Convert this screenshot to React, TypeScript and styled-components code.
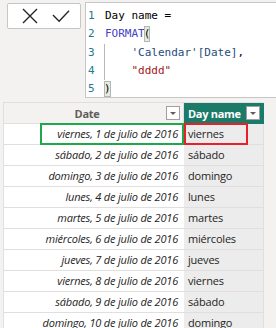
import React from "react";
import styled, { createGlobalStyle } from "styled-components";

const Global = createGlobalStyle`
  html, body { margin: 0; padding: 0; }
  body {
    background: #f3f2f1;
    font-family: "Open Sans", "Noto Sans", sans-serif;
    width: 276px;
    height: 328px;
    overflow: hidden;
  }
`;

const Page = styled.div`
  display: flex;
  flex-direction: column;
`;

const FormulaBar = styled.div`
  display: flex;
  align-items: flex-start;
  padding-top: 2px;
`;

const ActionBox = styled.div`
  margin: 1px 0 0 7px;
  width: 74px;
  height: 26px;
  box-sizing: border-box;
  background: #ffffff;
  border: 1px solid #c8c6c4;
  border-radius: 2px;
  display: flex;
  align-items: center;
  justify-content: center;
  gap: 13px;
  padding-left: 2px;
`;

const IconBtn = styled.span`
  display: flex;
  align-items: center;
  justify-content: center;
  width: 18px;
  height: 18px;
`;

const Editor = styled.div`
  margin-left: 4px;
  flex: 1;
  height: 96px;
  box-sizing: border-box;
  background: #ffffff;
  border: 1px solid #c8c6c4;
  border-right: none;
  padding: 4px 0 0 2px;
  font-family: "DejaVu Sans Mono", "Liberation Mono", monospace;
  font-size: 11px;
`;

const Line = styled.div`
  display: flex;
  height: 18.3px;
  line-height: 18.3px;
  white-space: pre;
`;

const LineNo = styled.span`
  width: 16px;
  color: #237893;
`;

const Code = styled.span<{ $guide?: boolean }>`
  display: inline-block;
  color: #000000;
  border-left: 1px solid ${(p) => (p.$guide ? "#b8b8b8" : "transparent")};
`;

const Fn = styled.span`
  color: #4343c4;
`;

const Ref = styled.span`
  color: #1d4b7e;
`;

const Str = styled.span`
  color: #a31515;
`;

const Paren = styled.span`
  display: inline-block;
  line-height: 15px;
  height: 16px;
  vertical-align: middle;
  background: #e6eae3;
  outline: 1px solid #b3b9b0;
  outline-offset: -1px;
  color: #000;
  margin-left: -1px;
`;

const Table = styled.div`
  position: relative;
  margin: 4px 0 0 3px;
  width: 260px;
  display: grid;
  grid-template-columns: 180px 80px;
  grid-auto-rows: 21px;
  font-size: 11px;
  letter-spacing: -0.2px;
  border-top: 1px solid #e1dfdd;
  border-left: 1px solid #e1dfdd;
  box-sizing: border-box;
`;

const HeadCell = styled.div<{ $active?: boolean }>`
  display: flex;
  align-items: center;
  background: ${(p) => (p.$active ? "#1c7a68" : "#f3f2f1")};
  color: ${(p) => (p.$active ? "#ffffff" : "#605e5c")};
  font-weight: 700;
  font-size: 11px;
  letter-spacing: -0.3px;
  padding: 0 3px 0 4px;
  border-right: 1px solid ${(p) => (p.$active ? "#1c7a68" : "#e1dfdd")};
  border-bottom: 1px solid ${(p) => (p.$active ? "#1c7a68" : "#e1dfdd")};
  box-sizing: border-box;
  white-space: nowrap;
`;

const HeadLabel = styled.span<{ $center?: boolean }>`
  flex: 1;
  line-height: 1;
  text-align: ${(p) => (p.$center ? "center" : "left")};
`;

const Drop = styled.span`
  width: 14px;
  height: 14px;
  flex: none;
  box-sizing: border-box;
  background: #ffffff;
  border: 1px solid #a19f9d;
  display: flex;
  align-items: center;
  justify-content: center;
  &::after {
    content: "";
    border-left: 3px solid transparent;
    border-right: 3px solid transparent;
    border-top: 3px solid #605e5c;
  }
`;

const DateCell = styled.div`
  position: relative;
  background: #ffffff;
  font-style: italic;
  color: #252423;
  text-align: right;
  padding-right: 6px;
  line-height: 20px;
  white-space: nowrap;
  border-bottom: 1px solid #e1dfdd;
  box-sizing: border-box;
`;

const DayCell = styled.div`
  position: relative;
  background: #ececec;
  color: #252423;
  padding-left: 4px;
  line-height: 20px;
  white-space: nowrap;
  border-bottom: 1px solid #e1dfdd;
  border-right: 1px solid #e1dfdd;
  box-sizing: border-box;
`;

const Mark = styled.span<{ $color: string; $left: number; $width: number }>`
  position: absolute;
  top: -1px;
  height: 22px;
  left: ${(p) => p.$left}px;
  width: ${(p) => p.$width}px;
  box-sizing: border-box;
  border: 2px solid ${(p) => p.$color};
  pointer-events: none;
`;

const rows: [string, string][] = [
  ["viernes, 1 de julio de 2016", "viernes"],
  ["sábado, 2 de julio de 2016", "sábado"],
  ["domingo, 3 de julio de 2016", "domingo"],
  ["lunes, 4 de julio de 2016", "lunes"],
  ["martes, 5 de julio de 2016", "martes"],
  ["miércoles, 6 de julio de 2016", "miércoles"],
  ["jueves, 7 de julio de 2016", "jueves"],
  ["viernes, 8 de julio de 2016", "viernes"],
  ["sábado, 9 de julio de 2016", "sábado"],
  ["domingo, 10 de julio de 2016", "domingo"],
];

export default function App() {
  return (
    <Page>
      <Global />
      <FormulaBar>
        <ActionBox>
          <IconBtn>
            <svg width="16" height="16" viewBox="0 0 16 16">
              <path d="M1 1 L15 15 M15 1 L1 15" stroke="#252423" strokeWidth="1.4" fill="none" />
            </svg>
          </IconBtn>
          <IconBtn>
            <svg width="19" height="14" viewBox="0 0 19 14">
              <path d="M1 6 L7.5 12.5 L18 1.5" stroke="#252423" strokeWidth="1.4" fill="none" />
            </svg>
          </IconBtn>
        </ActionBox>
        <Editor>
          <Line>
            <LineNo>1</LineNo>
            <Code>Day name =</Code>
          </Line>
          <Line>
            <LineNo>2</LineNo>
            <Code>
              <Fn>FORMAT</Fn>
              <Paren>(</Paren>
            </Code>
          </Line>
          <Line>
            <LineNo>3</LineNo>
            <Code $guide>
              {"    "}
              <Ref>'Calendar'[Date]</Ref>,
            </Code>
          </Line>
          <Line>
            <LineNo>4</LineNo>
            <Code $guide>
              {"    "}
              <Str>"dddd"</Str>
            </Code>
          </Line>
          <Line>
            <LineNo>5</LineNo>
            <Code>
              <Paren>)</Paren>
            </Code>
          </Line>
        </Editor>
      </FormulaBar>
      <Table>
        <HeadCell>
          <HeadLabel $center>Date</HeadLabel>
          <Drop />
        </HeadCell>
        <HeadCell $active>
          <HeadLabel>Day name</HeadLabel>
          <Drop />
        </HeadCell>
        {rows.map(([d, n], i) => (
          <React.Fragment key={i}>
            <DateCell>
              {d}
              {i === 0 && <Mark $color="#1fa84a" $left={36} $width={144} />}
            </DateCell>
            <DayCell>
              {n}
              {i === 0 && <Mark $color="#e8202a" $left={0} $width={64} />}
            </DayCell>
          </React.Fragment>
        ))}
      </Table>
    </Page>
  );
}
